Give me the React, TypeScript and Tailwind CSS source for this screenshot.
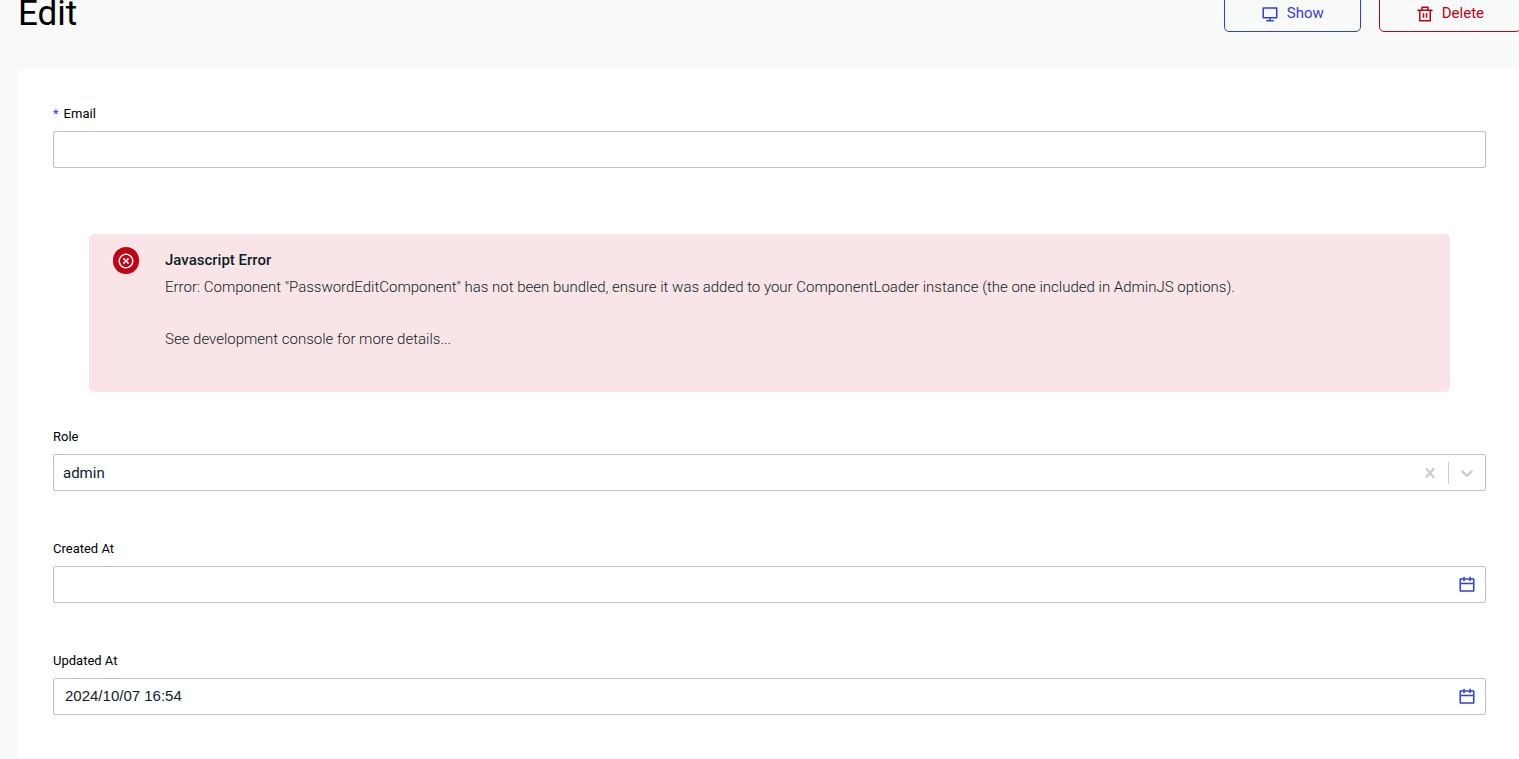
import { useState } from 'react';
import {
  RiCalendarLine,
  RiCloseCircleLine,
  RiComputerLine,
  RiDeleteBinLine,
} from 'react-icons/ri';

// ============================================================================
// Icons
// ============================================================================

function ClearIcon(): React.ReactElement {
  return (
    <svg width="20" height="20" viewBox="0 0 20 20" fill="currentColor" aria-hidden="true">
      <path d="M14.348 14.849c-0.469 0.469-1.229 0.469-1.697 0l-2.651-3.030-2.651 3.029c-0.469 0.469-1.229 0.469-1.697 0-0.469-0.469-0.469-1.229 0-1.697l2.758-3.15-2.759-3.152c-0.469-0.469-0.469-1.228 0-1.697s1.228-0.469 1.697 0l2.652 3.031 2.651-3.031c0.469-0.469 1.228-0.469 1.697 0s0.469 1.229 0 1.697l-2.758 3.152 2.758 3.15c0.469 0.469 0.469 1.229 0 1.698z" />
    </svg>
  );
}

function ChevronIcon(): React.ReactElement {
  return (
    <svg width="20" height="20" viewBox="0 0 20 20" fill="currentColor" aria-hidden="true">
      <path d="M4.516 7.548c0.436-0.446 1.043-0.481 1.576 0l3.908 3.747 3.908-3.747c0.533-0.481 1.141-0.446 1.574 0 0.436 0.445 0.408 1.197 0 1.615-0.406 0.418-4.695 4.502-4.695 4.502-0.217 0.223-0.502 0.335-0.787 0.335s-0.57-0.112-0.789-0.335c0 0-4.287-4.084-4.695-4.502s-0.436-1.17 0-1.615z" />
    </svg>
  );
}

// ============================================================================
// Form parts
// ============================================================================

interface FieldProps {
  id: string;
  label: string;
  required?: boolean;
  children: React.ReactNode;
}

function Field({ id, label, required = false, children }: FieldProps): React.ReactElement {
  return (
    <div className="flex flex-col gap-2">
      <label htmlFor={id} className="text-[13px] leading-[19px] text-black">
        {required && <span className="mr-[5px] text-[#3040d6]">*</span>}
        {label}
      </label>
      <div className="flex h-[37px] items-center rounded-xs border border-[#bbc3cb] bg-white">
        {children}
      </div>
    </div>
  );
}

interface DateFieldProps {
  id: string;
  label: string;
  initialValue?: string;
}

function DateField({ id, label, initialValue = '' }: DateFieldProps): React.ReactElement {
  const [value, setValue] = useState(initialValue);

  return (
    <Field id={id} label={label}>
      <input
        id={id}
        type="text"
        value={value}
        onChange={(e) => {
          setValue(e.target.value);
        }}
        className="h-full min-w-0 flex-1 px-[11px] pb-0.5 font-['Liberation_Sans',sans-serif] text-[15px] text-[#0c1e29] outline-none"
      />
      <button type="button" aria-label={`Pick ${label}`} className="px-[9px] text-[#3040d6]">
        <RiCalendarLine size={18} />
      </button>
    </Field>
  );
}

function ErrorMessage(): React.ReactElement {
  return (
    <div
      role="alert"
      className="mx-9 flex min-h-[158px] items-start gap-[26px] rounded-[5px] bg-[#f9e5e7] px-6 py-[13px] text-[15px] leading-[26px] text-[#0c1e29]"
    >
      <span className="flex h-[27px] w-[26px] shrink-0 items-center justify-center rounded-full bg-[#c20012] text-white">
        <RiCloseCircleLine size={18} />
      </span>
      <div>
        <h2 className="mb-px font-medium">Javascript Error</h2>
        <p className="mb-[26px] font-light">
          Error: Component "PasswordEditComponent" has not been bundled, ensure it was added to your
          ComponentLoader instance (the one included in AdminJS options).
        </p>
        <p className="font-light">See development console for more details...</p>
      </div>
    </div>
  );
}

// ============================================================================
// Page
// ============================================================================

export default function App(): React.ReactElement {
  const [email, setEmail] = useState('');
  const [role, setRole] = useState('admin');

  return (
    <div className="overflow-hidden bg-[#f8faf9] font-[Roboto,sans-serif]">
      {/* The content is slightly wider than the window and scrolled a little past its top */}
      <main className="-mr-[2px] flex min-h-screen flex-col pl-[18px]">
        <header className="-mt-[5px] mb-[37px] flex items-center justify-between">
          <h1 className="text-[35px] leading-[37px] text-black">Edit</h1>
          <div className="flex gap-[18px]">
            <a
              href="#show"
              className="flex h-[37px] items-center gap-2 rounded-[5px] border border-[#3040d6] px-9 text-[15px] text-[#3040d6]"
            >
              <RiComputerLine size={18} />
              Show
            </a>
            <a
              href="#delete"
              className="flex h-[37px] items-center gap-2 rounded-[5px] border border-[#c20012] px-9 text-[15px] text-[#c20012]"
            >
              <RiDeleteBinLine size={18} />
              Delete
            </a>
          </div>
        </header>

        <form className="grow bg-white p-[35px]">
          <Field id="email" label="Email" required>
            <input
              id="email"
              type="email"
              value={email}
              onChange={(e) => {
                setEmail(e.target.value);
              }}
              className="h-full min-w-0 flex-1 px-[11px] text-[15px] outline-none"
            />
          </Field>

          <div className="mt-[66px] mb-[35px]">
            <ErrorMessage />
          </div>

          <div className="flex flex-col gap-12">
            <Field id="role" label="Role">
              <select
                id="role"
                value={role}
                onChange={(e) => {
                  setRole(e.target.value);
                }}
                className="h-full min-w-0 flex-1 appearance-none px-[9px] pt-px text-[15px] text-[#0c1e29] outline-none"
              >
                <option value="" />
                <option value="admin">admin</option>
                <option value="user">user</option>
              </select>
              <button
                type="button"
                aria-label="Clear role"
                onClick={() => {
                  setRole('');
                }}
                className="px-2 text-[#cccccc]"
              >
                <ClearIcon />
              </button>
              <span className="h-[22px] w-px bg-[#cccccc]" />
              <span className="px-2 text-[#cccccc]">
                <ChevronIcon />
              </span>
            </Field>
            <DateField id="createdAt" label="Created At" />
            <DateField id="updatedAt" label="Updated At" initialValue="2024/10/07 16:54" />
          </div>
        </form>
      </main>
    </div>
  );
}
